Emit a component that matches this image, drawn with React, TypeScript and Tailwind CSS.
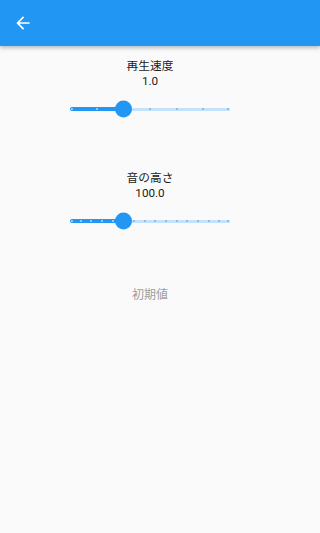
import React from 'react';

const BLUE = '#2196F3';

function ArrowBack() {
  return (
    <svg width="20" height="20" viewBox="0 0 24 24" fill="white">
      <path d="M20 11H7.83l5.59-5.59L12 4l-8 8 8 8 1.41-1.41L7.83 13H20v-2z" />
    </svg>
  );
}

interface SliderProps {
  min: number;
  max: number;
  divisions: number;
  value: number;
}

function Slider({ min, max, divisions, value }: SliderProps) {
  const frac = (value - min) / (max - min);
  const width = 160;
  const ticks = Array.from({ length: divisions + 1 }, (_, i) => i / divisions);
  return (
    <div className="relative w-[160px] h-[40px] mt-[1px] flex items-center">
      <div className="h-[4px] rounded-l-full" style={{ width: frac * width, backgroundColor: BLUE }} />
      <div className="h-[3px] flex-1 rounded-r-full bg-[#c4e2fb]" />
      {ticks.map((t, i) => (
        <span
          key={i}
          className={`absolute top-1/2 -translate-y-1/2 w-[2px] h-[2px] rounded-full ${t <= frac ? 'bg-[#b3dafb]' : 'bg-[#6fb6f4]'}`}
          style={{ left: Math.min(Math.max(t * width - 1, 1), width - 3) }}
        />
      ))}
      <span
        className="absolute top-1/2 -translate-y-1/2 w-[17px] h-[17px] rounded-full"
        style={{ left: frac * width - 8.5, backgroundColor: BLUE }}
      />
    </div>
  );
}

export default function App() {
  return (
    <div
      className="w-full min-w-[300px] h-[533px] bg-[#fafafa] overflow-hidden"
      style={{ fontFamily: 'Roboto, "Noto Sans CJK JP", sans-serif' }}
    >
      <div className="h-[46px] bg-[#2196F3] shadow-[0_2px_4px_rgba(0,0,0,0.25)] flex items-center pl-[13px] relative z-10">
        <ArrowBack />
      </div>
      <div className="w-[300px] flex flex-col items-center pt-[13px] text-[11.7px] leading-[14px] text-[#212121]">
        <div>再生速度</div>
        <div className="mt-[1px]">1.0</div>
        <Slider min={0.5} max={2.0} divisions={6} value={1.0} />
        <div className="mt-[42px]">音の高さ</div>
        <div className="mt-[1px]">100.0</div>
        <Slider min={50} max={200} divisions={15} value={100} />
        <button className="mt-[39px] h-[30px] px-[13px] text-[12px] text-[#9e9e9e]">初期値</button>
      </div>
    </div>
  );
}
